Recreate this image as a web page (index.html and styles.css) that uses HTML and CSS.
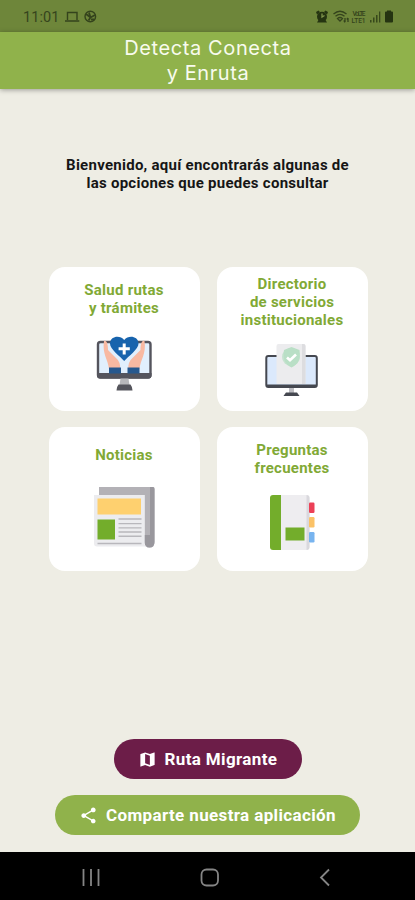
FILE: index.html
```html
<!DOCTYPE html>
<html lang="es">
<head>
<meta charset="utf-8">
<title>Detecta Conecta y Enruta</title>
<link rel="stylesheet" href="styles.css">
</head>
<body>
<div class="status">
  <span class="clock">11:01</span>
  <svg class="status-left" viewBox="64 8 34 18" width="34" height="18">
    <g fill="none" stroke="#34431c" stroke-width="1.4">
      <path d="M67.5 20V12.5H77V20M65 21H79.3"/>
      <circle cx="90.300" cy="16.500" r="5.300"/>
      <path d="M86 14L90.500 17.500L95 15M88.500 20.500L90.500 17.500L89 12.500M91 19.500H94" stroke-width="1.8"/>
    </g>
  </svg>
  <svg class="status-right" viewBox="314 8 84 18" width="84" height="18">
    <g fill="#253411">
      <circle cx="322" cy="16.800" r="5"/>
      <path d="M316 12L318.500 10.500L320 12L317 14.500ZM328 12L325.500 10.500L324 12L327 14.500ZM317 22.500L318.500 20H325.500L327 22.500Z"/>
      <path d="M386 11.500H387V10.500H391V11.500H392Q393 11.500 393 12.500V21.500Q393 22.500 392 22.500H386Q385 22.500 385 21.500V12.500Q385 11.500 386 11.500Z"/>
      <path d="M370 20h1.500v2.500h-1.500zM373 17.500h1.500v5h-1.500zM376 15h1.500v7.500h-1.500zM379 11.500h1.300v11h-1.300z" opacity=".75"/>
    </g>
    <path d="M322 13.500V17L324.500 15.500" fill="none" stroke="#80954c" stroke-width="1.300"/>
    <g fill="none" stroke="#34431c" stroke-width="1.300">
      <path d="M333.500 14Q340 8.500 346.500 14M335.500 16.300Q340 12.500 344.500 16.300M337.500 18.500Q340 16.500 342.500 18.500L340 21ZM345 18V22M343.800 20.500L345 22.300M348 22V18M346.800 19.500L348 18"/>
    </g>
    <g class="volte"><text x="352.500" y="16" textLength="13">VoLTE</text><text x="351.500" y="22.500" textLength="14">LTE1</text></g>
  </svg>
</div>
<header class="bar">
  <h1>Detecta Conecta<br>y Enruta</h1>
</header>
<main>
  <p class="welcome">Bienvenido, aquí encontrarás algunas de<br>las opciones que puedes consultar</p>
  <section class="grid">
    <a class="card health">
      <h2>Salud rutas<br>y trámites</h2>
      <svg viewBox="93 335 62 66">
        <rect x="98" y="342" width="52.500" height="35.500" rx="2.500" fill="#e1effd" stroke="#54545d" stroke-width="2.400"/>
        <path d="M97 373H151.500V375.500Q151.500 378.500 148.500 378.500H100Q97 378.500 97 375.500Z" fill="#54545d"/>
        <path d="M104 341C107 340 108 345 108 350L115 357Q121 362 120 369H109C108 359 102 354 104 341ZM144.500 341C141.500 340 140.500 345 140.500 350L133.500 357Q127.500 362 128.500 369H139.500C140.500 359 146.500 354 144.500 341Z" fill="#f8b9a2"/>
        <path d="M124.200 361C120 356 109.500 349 110 343C110.500 336 120 334.500 124.200 340C128.400 334.500 138 336 138.500 343C139 349 128.400 356 124.200 361Z" fill="#1763ad"/>
        <path d="M122.700 343.500H125.700V347.300H129.800V350.300H125.700V354.500H122.700V350.300H118.600V347.300H122.700Z" fill="#fff"/>
        <path d="M109 367.500H121V373.500H109ZM127.500 367.500H139.500V373.500H127.500Z" fill="#27588e"/>
        <path d="M120.500 378.500H128.500L129.500 385H119.500Z" fill="#b8b8bb"/>
        <path d="M118.500 384.500H130.500Q132 386 132.500 390.500H116.500Q117 386 118.500 384.500Z" fill="#55555c"/>
      </svg>
    </a>
    <a class="card directory">
      <h2>Directorio<br>de servicios<br>institucionales</h2>
      <svg viewBox="261 341 62 66">
        <rect x="266.300" y="356" width="50.500" height="31" rx="2" fill="#dbe9fc" stroke="#454850" stroke-width="2"/>
        <path d="M266.500 385.700H317" stroke="#454850" stroke-width="2.600"/>
        <path d="M278.500 344H303.500Q305.500 344 305.500 346V384H276.500V346Q276.500 344 278.500 344Z" fill="#ececee"/>
        <path d="M302 344H303.500Q305.500 344 305.500 346V384H302Z" fill="#dddde0"/>
        <path d="M284 350L291.500 347L299.500 350C301 359 298 364.500 291.500 367.500C285 364.500 282.500 359 284 350Z" fill="#b9dfc5"/>
        <circle cx="291" cy="357" r="9" fill="#b9dfc5" opacity=".75"/>
        <path d="M287 357.500L290 360.300L296 354.500" fill="none" stroke="#fff" stroke-width="2.600"/>
        <path d="M289 388H294V393H289Z" fill="#bdbdc2"/>
        <path d="M286 392.500H297L299.500 396H283.500Z" fill="#454850"/>
      </svg>
    </a>
    <a class="card news">
      <h2>Noticias</h2>
      <svg viewBox="93 485 62 66">
        <path d="M99 487H153Q154.500 487 154.500 489V542Q154.500 547.500 149.500 547.500Q144.500 547.500 144.500 542V495H99Z" fill="#b3b1b6"/>
        <path d="M150 487H153Q154.500 487 154.500 489V542Q154.500 547.500 149.500 547.500Q144.500 547.500 144.500 542V535H150Z" fill="#99979d"/>
        <path d="M94 495H144.500V543Q144.500 546 147 546.500H97Q94 546.500 94 543.500Z" fill="#ececef"/>
        <path d="M97.500 498.500H141V514.500H97.500Z" fill="#fed06f"/>
        <path d="M97.500 519.500H115V539.500H97.500Z" fill="#73ad2b"/>
        <path d="M118.500 519H141.500M118.500 523.600H141.500M118.500 527.900H141.500M118.500 532H141.500M118.500 536.300H141.500M97.500 543.500H141.500" stroke="#b8b7bc" stroke-width="1.400"/>
      </svg>
    </a>
    <a class="card faq">
      <h2>Preguntas<br>frecuentes</h2>
      <svg viewBox="261 491 62 66">
        <path d="M279 495H306Q309.500 495 309.500 498V547Q309.500 550 306 550H279Z" fill="#eeedf0"/>
        <path d="M306.500 495Q309.500 495 309.500 498V547Q309.500 550 306.500 550Z" fill="#d9d8dd"/>
        <path d="M273 495H281V550H273Q270 550 270 547V498Q270 495 273 495Z" fill="#73ad2b"/>
        <rect x="285.500" y="527.500" width="19" height="13" fill="#73ad2b"/>
        <rect x="309" y="502.500" width="5.500" height="10.500" rx="1.200" fill="#ec4057"/>
        <rect x="309" y="517" width="5.500" height="10.500" rx="1.200" fill="#fbc267"/>
        <rect x="309" y="532" width="5.500" height="10.500" rx="1.200" fill="#78b4ef"/>
      </svg>
    </a>
  </section>
  <div class="actions">
    <button class="pill route">
      <svg viewBox="0 0 24 24" width="19" height="19"><path fill="currentColor" d="M20.500 3l-.16.030L15 5.100 9 3 3.360 4.900c-.21.070-.36.250-.36.480V20.500c0 .28.220.5.500.5l.16-.03L9 18.900l6 2.100 5.640-1.900c.21-.07.360-.25.360-.48V3.500c0-.28-.22-.5-.5-.5zM15 19l-6-2.110V5l6 2.110V19z"/></svg>
      <span>Ruta Migrante</span>
    </button>
    <button class="pill share">
      <svg viewBox="0 0 24 24" width="19" height="19"><path fill="currentColor" d="M18 16.080c-.76 0-1.440.3-1.960.77L8.910 12.700c.05-.23.090-.46.090-.7s-.04-.47-.09-.7l7.050-4.110c.54.5 1.250.81 2.040.81 1.660 0 3-1.340 3-3s-1.340-3-3-3-3 1.340-3 3c0 .24.040.47.090.7L8.040 9.810C7.500 9.310 6.790 9 6 9c-1.660 0-3 1.340-3 3s1.340 3 3 3c.79 0 1.500-.31 2.040-.81l7.120 4.160c-.05.21-.08.43-.08.65 0 1.610 1.310 2.920 2.920 2.920s2.920-1.310 2.920-2.920-1.310-2.920-2.920-2.920z"/></svg>
      <span>Comparte nuestra aplicación</span>
    </button>
  </div>
</main>
<nav class="sysnav">
  <svg viewBox="0 0 18 20" width="18" height="20"><path d="M1.500 1V18M9 1V18M16.500 1V18"/></svg>
  <svg viewBox="0 0 20 20" width="20" height="20"><rect x="1.500" y="1.500" width="16.500" height="16" rx="5"/></svg>
  <svg viewBox="0 0 12 20" width="12" height="20"><path d="M10 1.500L2 9.500L10 17.500"/></svg>
</nav>
</body>
</html>
```
FILE: styles.css
```css
* { box-sizing: border-box; }
body {
  margin: 0;
  width: 415px;
  height: 900px;
  display: flex;
  flex-direction: column;
  overflow: hidden;
  background: #eeede4;
  font-family: Roboto, "Liberation Sans", sans-serif;
}
.status {
  height: 32px;
  flex: none;
  display: flex;
  align-items: center;
  padding: 2px 17px 0 23px;
  background: #6e863a;
}
.clock {
  width: 41px;
  color: #35441d;
  font-size: 14.5px;
  letter-spacing: 0.1px;
}
.status-right { margin-left: auto; }
.volte {
  fill: #34431c;
  font-size: 6.5px;
  font-weight: 500;
}
.bar {
  height: 57px;
  flex: none;
  background: #90b24b;
  box-shadow: 0 1px 5px rgba(0, 0, 0, 0.35);
  z-index: 1;
}
.bar h1 {
  margin: 0;
  padding: 4px 0 0 1px;
  color: #f8fbee;
  font: 400 20px/25px Inter, "Open Sans", sans-serif;
  letter-spacing: 0.6px;
  text-align: center;
}
main {
  flex: 1;
  display: flex;
  flex-direction: column;
  align-items: center;
}
.welcome {
  margin: 67px 0 0;
  color: #161616;
  font-size: 15px;
  font-weight: 700;
  line-height: 18px;
  letter-spacing: 0.26px;
  text-align: center;
}
.grid {
  margin-top: 75px;
  padding-left: 1px;
  display: grid;
  grid-template-columns: 151px 151px;
  grid-auto-rows: 144px;
  gap: 16px 17px;
}
.card {
  display: flex;
  flex-direction: column;
  align-items: center;
  background: #fff;
  border-radius: 16px;
}
.card h2 {
  margin: 0;
  color: #81a935;
  font-size: 15px;
  font-weight: 700;
  line-height: 18px;
  letter-spacing: 0.25px;
  text-align: center;
}
.card svg { width: 62px; height: 66px; flex: none; }
.health { padding-top: 14px; }
.health svg { margin-top: 18px; }
.directory { padding-top: 8px; }
.directory svg { margin-top: 12px; }
.news { padding-top: 19px; }
.news svg { margin-top: 21px; }
.faq { padding-top: 14px; }
.faq svg { margin-top: 14px; }
.actions {
  margin-top: auto;
  margin-bottom: 17px;
  display: flex;
  flex-direction: column;
  align-items: center;
  gap: 16px;
}
.pill {
  height: 40px;
  display: flex;
  align-items: center;
  gap: 8px;
  padding: 0 24px;
  border: 0;
  border-radius: 20px;
  color: #fff;
  font: 700 17px/20px Roboto, sans-serif;
  letter-spacing: 0.37px;
  white-space: nowrap;
}
.route { background: #6c1d48; width: 188px; }
.share { background: #90b24b; width: 305px; }
.pill svg { flex: none; }
.sysnav {
  height: 48px;
  flex: none;
  display: flex;
  align-items: center;
  justify-content: space-between;
  padding: 4px 84px 0 82px;
  background: #000;
}
.sysnav svg {
  fill: none;
  stroke: #858585;
  stroke-width: 1.8;
}
```
